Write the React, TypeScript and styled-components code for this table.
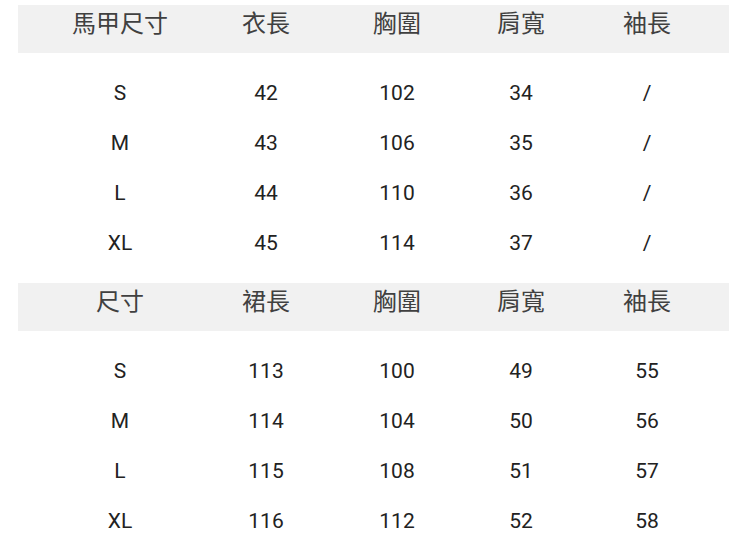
import React from "react";
import styled, { createGlobalStyle } from "styled-components";

const Global = createGlobalStyle`
  html, body { margin: 0; padding: 0; background: #ffffff; }
  body { width: 750px; height: 544px; overflow: hidden; }
`;

const COLS = "204px 88px 174px 74px 178px";

const Page = styled.div`
  display: flex;
  flex-direction: column;
  gap: 15px;
  padding: 5px 21px 0 18px;
  font-family: Roboto, "Liberation Sans", Arial, sans-serif;
`;

const Table = styled.section`
  display: flex;
  flex-direction: column;
`;

const HeaderRow = styled.div`
  display: grid;
  grid-template-columns: ${COLS};
  height: 48px;
  margin-bottom: 15px;
  background: #f1f1f1;
  justify-items: center;
  align-items: start;
`;

const HeaderCell = styled.div`
  font-family: "Noto Sans CJK TC", "Noto Sans CJK SC", sans-serif;
  font-size: 24px;
  line-height: 34px;
  color: #404040;
  white-space: nowrap;
`;

const Row = styled.div`
  display: grid;
  grid-template-columns: ${COLS};
  height: 50px;
  justify-items: center;
  align-items: center;
`;

const Cell = styled.div`
  font-size: 21px;
  color: #222222;
  white-space: nowrap;
`;

type TableData = { headers: string[]; rows: string[][] };

const tables: TableData[] = [
  {
    headers: ["馬甲尺寸", "衣長", "胸圍", "肩寬", "袖長"],
    rows: [
      ["S", "42", "102", "34", "/"],
      ["M", "43", "106", "35", "/"],
      ["L", "44", "110", "36", "/"],
      ["XL", "45", "114", "37", "/"],
    ],
  },
  {
    headers: ["尺寸", "裙長", "胸圍", "肩寬", "袖長"],
    rows: [
      ["S", "113", "100", "49", "55"],
      ["M", "114", "104", "50", "56"],
      ["L", "115", "108", "51", "57"],
      ["XL", "116", "112", "52", "58"],
    ],
  },
];

export default function App() {
  return (
    <>
      <Global />
      <Page>
        {tables.map((t, ti) => (
          <Table key={ti}>
            <HeaderRow>
              {t.headers.map((h) => (
                <HeaderCell key={h}>{h}</HeaderCell>
              ))}
            </HeaderRow>
            {t.rows.map((r, ri) => (
              <Row key={ri}>
                {r.map((c, ci) => (
                  <Cell key={ci}>{c}</Cell>
                ))}
              </Row>
            ))}
          </Table>
        ))}
      </Page>
    </>
  );
}
